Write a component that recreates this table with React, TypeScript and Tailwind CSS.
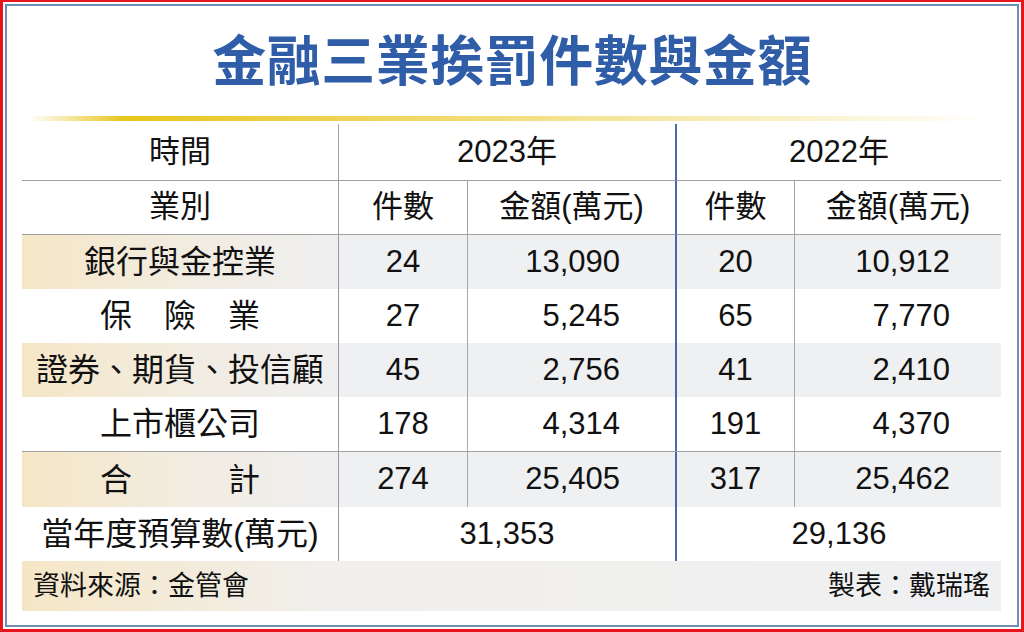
const font = '[font-family:"Liberation_Sans","Noto_Sans_CJK_TC",sans-serif]';

const rows = [
  { label: '銀行與金控業', a: '24', b: '13,090', c: '20', d: '10,912', shade: true },
  { label: '保　險　業', a: '27', b: '5,245', c: '65', d: '7,770', shade: false },
  { label: '證券、期貨、投信顧', a: '45', b: '2,756', c: '41', d: '2,410', shade: true },
  { label: '上市櫃公司', a: '178', b: '4,314', c: '191', d: '4,370', shade: false },
];

const labelShade = 'bg-gradient-to-r from-[#f5e6c6] via-[#f2ece0] to-[#efeff0]';
const numShade = 'bg-[#eff0f2]';

const Row = ({
  label,
  a,
  b,
  c,
  d,
  shade,
  height = 'h-[54px]',
}: {
  label: string;
  a: string;
  b: string;
  c: string;
  d: string;
  shade: boolean;
  height?: string;
}) => (
  <>
    <div className={`${height} flex items-center justify-center whitespace-pre text-[32px] ${shade ? labelShade : ''}`}>
      {label}
    </div>
    <div className={`${height} flex items-center justify-center border-l border-[#9a9a9a] ${shade ? numShade : ''}`}>
      {a}
    </div>
    <div className={`${height} flex items-center justify-end pr-[55px] border-l border-[#a8a8a8] ${shade ? numShade : ''}`}>
      {b}
    </div>
    <div className={`${height} flex items-center justify-center border-l-2 border-[#4a68b0] ${shade ? numShade : ''}`}>
      {c}
    </div>
    <div className={`${height} flex items-center justify-end pr-[51px] border-l border-[#a8a8a8] ${shade ? numShade : ''}`}>
      {d}
    </div>
  </>
);

export default function App() {
  return (
    <div className={`w-[1024px] h-[632px] bg-white border-[3px] border-t-2 border-[#e8141e] p-[2px] ${font}`}>
      <div className="h-full border-2 border-[#6f8db5] px-[15px]">
        <h1 className="pt-[29px] text-center text-[54px] leading-[54px] font-bold text-[#2f5da7] tracking-[0.5px]">
          金融三業挨罰件數與金額
        </h1>
        <div className="mt-[27px] mx-[6px] h-[5px] bg-gradient-to-r from-transparent via-[#e8c51c] via-10% to-transparent" />

        <div className="mt-[3px] grid grid-cols-[316px_129px_208px_119px_207px] text-[31px] text-[#111]">
          {/* header row 1 */}
          <div className="h-[57px] flex items-center justify-center border-b border-[#a0a0a0]">時間</div>
          <div className="col-span-2 h-[57px] flex items-center justify-center border-l border-b border-[#a0a0a0]">
            2023年
          </div>
          <div className="col-span-2 h-[57px] flex items-center justify-center border-l-2 border-l-[#4a68b0] border-b border-b-[#a0a0a0]">
            2022年
          </div>

          {/* header row 2 */}
          <div className="h-[54px] flex items-center justify-center border-b border-[#a0a0a0]">業別</div>
          <div className="h-[54px] flex items-center justify-center border-l border-b border-[#a0a0a0]">件數</div>
          <div className="h-[54px] flex items-center justify-center border-l border-b border-[#a0a0a0]">金額(萬元)</div>
          <div className="h-[54px] flex items-center justify-center border-l-2 border-l-[#4a68b0] border-b border-b-[#a0a0a0]">
            件數
          </div>
          <div className="h-[54px] flex items-center justify-center border-l border-b border-[#a0a0a0]">金額(萬元)</div>

          {rows.map((r) => (
            <Row key={r.label} {...r} />
          ))}

          {/* divider before total */}
          <div className="col-span-5 h-px bg-[#a0a0a0]" />
          <Row label="合　　　計" a="274" b="25,405" c="317" d="25,462" shade={true} height="h-[55px]" />

          {/* budget row */}
          <div className="h-[54px] flex items-center justify-center text-[32px]">當年度預算數(萬元)</div>
          <div className="col-span-2 h-[54px] flex items-center justify-center border-l border-[#9a9a9a]">31,353</div>
          <div className="col-span-2 h-[54px] flex items-center justify-center border-l-2 border-[#4a68b0]">29,136</div>

          {/* footer */}
          <div className="col-span-5 h-[50px] flex items-center justify-between px-[11px] text-[27px] bg-gradient-to-r from-[#f5e6c6] via-[#f1efeb] via-30% to-[#eff0f2]">
            <span>資料來源：金管會</span>
            <span>製表：戴瑞瑤</span>
          </div>
        </div>
      </div>
    </div>
  );
}
